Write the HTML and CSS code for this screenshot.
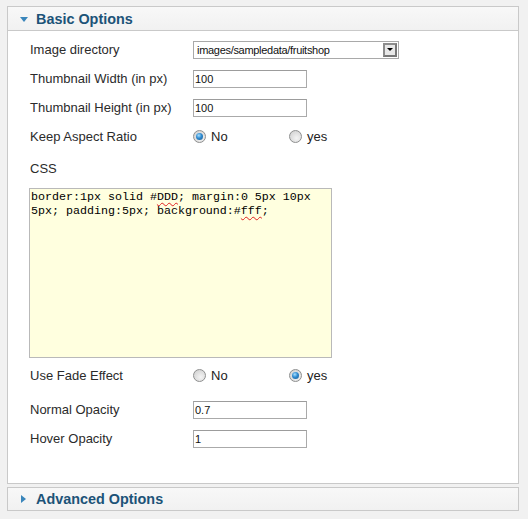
FILE: index.html
```html
<!DOCTYPE html>
<html>
<head>
<meta charset="utf-8">
<link rel="stylesheet" href="styles.css">
</head>
<body>
<div class="page">
  <div class="panel">
    <div class="panel-head">
      <span class="tri-down"></span>
      <span class="panel-title">Basic Options</span>
    </div>
    <div class="panel-body">
      <div class="row">
        <div class="label">Image directory</div>
        <div class="select">
          <span class="select-text">images/sampledata/fruitshop</span>
          <span class="select-btn"><span class="select-arrow"></span></span>
        </div>
      </div>
      <div class="row">
        <div class="label">Thumbnail Width (in px)</div>
        <div class="input">100</div>
      </div>
      <div class="row">
        <div class="label">Thumbnail Height (in px)</div>
        <div class="input">100</div>
      </div>
      <div class="row">
        <div class="label">Keep Aspect Ratio</div>
        <div class="radios">
          <div class="radio-item"><span class="radio checked"></span><span class="radio-label">No</span></div>
          <div class="radio-item"><span class="radio"></span><span class="radio-label">yes</span></div>
        </div>
      </div>
      <div class="css-label">CSS</div>
      <div class="textarea">
        <div class="ta-line">border:1px solid #<span class="spell">DDD</span>; margin:0 5px 10px</div>
        <div class="ta-line">5px; padding:5px; background:#<span class="spell">fff</span>;</div>
      </div>
      <div class="row row-fade">
        <div class="label">Use Fade Effect</div>
        <div class="radios">
          <div class="radio-item"><span class="radio"></span><span class="radio-label">No</span></div>
          <div class="radio-item"><span class="radio checked"></span><span class="radio-label">yes</span></div>
        </div>
      </div>
      <div class="row row-opacity">
        <div class="label">Normal Opacity</div>
        <div class="input">0.7</div>
      </div>
      <div class="row">
        <div class="label">Hover Opacity</div>
        <div class="input">1</div>
      </div>
    </div>
  </div>
  <div class="panel panel-collapsed">
    <div class="panel-head panel-head-last">
      <span class="tri-right"></span>
      <span class="panel-title">Advanced Options</span>
    </div>
  </div>
</div>
</body>
</html>
```
FILE: styles.css
```css
html, body {
  margin: 0;
  padding: 0;
}
body {
  background: #f1f1f1;
  font-family: "Liberation Sans", Arial, sans-serif;
  color: #2b2b2b;
}
.page {
  padding: 6px 0 0 7px;
  width: 512px;
}
.panel {
  border: 1px solid #c9c9c9;
  background: #ffffff;
}
.panel-collapsed {
  margin-top: 3px;
  background: #f7f7f7;
}
.panel-head {
  height: 23px;
  border-bottom: 1px solid #c9c9c9;
  background: linear-gradient(#f8f8f8, #f1f1f1);
  display: flex;
  align-items: center;
  padding-left: 12px;
}
.panel-head-last {
  height: 22px;
  border-bottom: none;
}
.panel-title {
  font-weight: bold;
  font-size: 14.4px;
  color: #1c5378;
  margin-left: 8px;
}
.tri-down {
  width: 0;
  height: 0;
  border-left: 4px solid transparent;
  border-right: 4px solid transparent;
  border-top: 5px solid #3a86bb;
  margin-top: 1px;
}
.tri-right {
  width: 0;
  height: 0;
  border-top: 4px solid transparent;
  border-bottom: 4px solid transparent;
  border-left: 5px solid #3a86bb;
  margin-left: 1px;
  margin-right: 2px;
}
.panel-body {
  padding: 4px 0 30px 22px;
}
.row {
  display: flex;
  align-items: center;
  height: 29px;
}
.label {
  width: 163px;
  font-size: 13px;
  line-height: 16px;
  flex: none;
}
.select {
  width: 206px;
  height: 18px;
  box-sizing: border-box;
  border: 1px solid #a9a9a9;
  display: flex;
  align-items: center;
  justify-content: space-between;
  background: #fff;
}
.select-text {
  font-size: 11px;
  letter-spacing: -0.3px;
  color: #111;
  padding-left: 3px;
}
.select-btn {
  width: 14px;
  height: 14px;
  box-sizing: border-box;
  margin-right: 1px;
  border: 2px solid #8c8c8c;
  border-right-color: #777;
  border-bottom-color: #777;
  background: #e8e8e8;
  display: flex;
  align-items: center;
  justify-content: center;
}
.select-arrow {
  width: 0;
  height: 0;
  border-left: 3px solid transparent;
  border-right: 3px solid transparent;
  border-top: 3px solid #000;
}
.input {
  width: 114px;
  height: 18px;
  box-sizing: border-box;
  border: 1px solid #aaaaaa;
  border-top-color: #9c9c9c;
  background: #fff;
  font-size: 11px;
  line-height: 16px;
  padding-left: 1px;
  color: #111;
}
.radios {
  display: flex;
  align-items: center;
}
.radio-item {
  display: flex;
  align-items: center;
  width: 96px;
}
.radio {
  width: 13px;
  height: 13px;
  box-sizing: border-box;
  border-radius: 50%;
  border: 1px solid #8e8f8f;
  background: radial-gradient(circle at 60% 65%, #f4f4f4 0%, #dcdcdc 60%, #cfcfcf 100%);
  position: relative;
  flex: none;
}
.radio.checked::after {
  content: "";
  position: absolute;
  left: 2px;
  top: 2px;
  width: 7px;
  height: 7px;
  border-radius: 50%;
  background: radial-gradient(circle at 40% 35%, #a8e0ff 0%, #2f8ad0 45%, #1c5a8e 100%);
}
.radio-label {
  font-size: 13px;
  margin-left: 5px;
  color: #222;
}
.css-label {
  font-size: 13px;
  line-height: 16px;
  padding-top: 10px;
  margin-bottom: 11px;
}
.textarea {
  width: 303px;
  height: 170px;
  box-sizing: border-box;
  margin-left: -1px;
  border: 1px solid #b9b9b9;
  background: #ffffdf;
  font-family: "Liberation Mono", "Courier New", monospace;
  font-size: 11.67px;
  line-height: 14px;
  color: #000;
  padding: 1px 1px 0 1px;
}
.ta-line {
  white-space: nowrap;
}
.spell {
  text-decoration: underline wavy #e02020;
  text-decoration-thickness: 1px;
  text-underline-offset: 2px;
}
.row-fade {
  margin-top: 3px;
}
.row-opacity {
  margin-top: 5px;
}
```
